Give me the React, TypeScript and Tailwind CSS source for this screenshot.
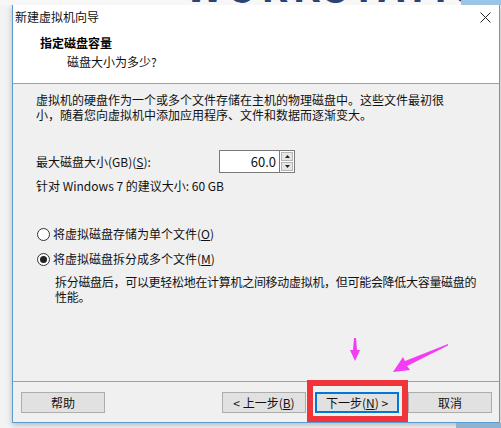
import React from 'react';

const font = { fontFamily: '"Noto Sans CJK SC", "Noto Sans", sans-serif' };

function Radio({ checked }: { checked?: boolean }) {
  return (
    <span className="w-[13px] h-[13px] rounded-full border border-[#333] bg-white flex items-center justify-center shrink-0">
      {checked && <span className="w-[7px] h-[7px] rounded-full bg-[#222]" />}
    </span>
  );
}

function Btn({ children, focused }: { children: React.ReactNode; focused?: boolean }) {
  return (
    <button
      className={
        'w-[84px] h-[21px] flex items-center justify-center text-[12px] text-[#111] bg-[#e1e1e1] ' +
        (focused ? 'border-2 border-[#0078d7]' : 'border border-[#adadad]')
      }
    >
      {children}
    </button>
  );
}

export default function App() {
  return (
    <div className="w-[501px] h-[428px] bg-[#f3f3f3] relative overflow-hidden" style={font}>
      {/* background strip showing behind the dialog */}
      <div className="h-[5px] overflow-hidden relative bg-[#f7f7f7]">
        <div className="absolute left-[186px] top-[-33px] text-[40px] font-bold tracking-[4px] text-[#2a4370] leading-[36px] whitespace-nowrap">
          WORKSTATION 12
        </div>
        <div className="absolute right-0 top-0 w-[40px] h-[5px] bg-[#9cc4e4]" />
      </div>

      {/* dialog window */}
      <div className="ml-[12px] w-[488px] h-[418px] border-x border-b border-[#5b9bd5] bg-[#f0f0f0] flex flex-col shadow-[0_2px_6px_rgba(0,0,0,0.25)]">
        {/* title bar */}
        <div className="h-[23px] bg-white flex items-center justify-between pl-[2px] pr-[8px]">
          <span className="text-[12px] text-[#111]">新建虚拟机向导</span>
          <svg width="11" height="11" viewBox="0 0 11 11" className="mt-[1px]">
            <path d="M0.5 0.5 L10.5 10.5 M10.5 0.5 L0.5 10.5" stroke="#222" strokeWidth="1" />
          </svg>
        </div>

        {/* header */}
        <div className="h-[56px] bg-white border-b border-[#a0a0a0] pl-[27px] pt-[6px]">
          <div className="text-[12px] font-bold text-[#000] leading-[17px]">指定磁盘容量</div>
          <div className="text-[12px] text-[#111] leading-[17px] mt-[2px] pl-[27px]">磁盘大小为多少?</div>
        </div>

        {/* body */}
        <div className="flex-1 border-b border-[#a0a0a0] pl-[23px] pt-[8px] text-[12px] text-[#111]">
          <div className="whitespace-nowrap">
            <div className="h-[15px] leading-[15px]">虚拟机的硬盘作为一个或多个文件存储在主机的物理磁盘中。这些文件最初很</div>
            <div className="h-[15px] leading-[15px]">小，随着您向虚拟机中添加应用程序、文件和数据而逐渐变大。</div>
          </div>

          <div className="flex items-center mt-[28px] h-[23px]">
            <span className="w-[183px]">
              最大磁盘大小(GB)(<span className="underline">S</span>):
            </span>
            <div className="w-[61px] h-[23px] bg-white border border-[#7a7a7a] flex items-center justify-end pr-[3px] text-[13px]">
              60.0
            </div>
            <div className="flex flex-col w-[15px] h-[23px] border border-l-0 border-[#7a7a7a] bg-white p-[1px] gap-[1px]">
              <div className="flex-1 bg-[#e6e6e6] border border-[#b5b5b5] flex items-center justify-center">
                <svg width="5" height="3" viewBox="0 0 5 3"><path d="M2.5 0 L5 3 L0 3 Z" fill="#222" /></svg>
              </div>
              <div className="flex-1 bg-[#e6e6e6] border border-[#b5b5b5] flex items-center justify-center">
                <svg width="5" height="3" viewBox="0 0 5 3"><path d="M0 0 L5 0 L2.5 3 Z" fill="#222" /></svg>
              </div>
            </div>
          </div>

          <div className="mt-[5px] leading-[15px]">针对 Windows 7 的建议大小: 60 GB</div>

          <div className="flex items-center gap-[3px] mt-[33px] h-[16px] pl-[1px]">
            <Radio />
            <span>
              将虚拟磁盘存储为单个文件(<span className="underline">O</span>)
            </span>
          </div>
          <div className="flex items-center gap-[3px] mt-[9px] h-[16px] pl-[1px]">
            <Radio checked />
            <span>
              将虚拟磁盘拆分成多个文件(<span className="underline">M</span>)
            </span>
          </div>
          <div className="mt-[7px] pl-[19px] whitespace-nowrap tracking-[-0.3px]">
            <div className="h-[15px] leading-[15px]">拆分磁盘后，可以更轻松地在计算机之间移动虚拟机，但可能会降低大容量磁盘的</div>
            <div className="h-[15px] leading-[15px]">性能。</div>
          </div>
        </div>

        {/* footer */}
        <div className="h-[40px] flex items-start pt-[10px] pl-[8px] pr-[7px]">
          <Btn>帮助</Btn>
          <div className="flex-1" />
          <div className="flex gap-[9px]">
            <Btn>
              &lt; 上一步(<span className="underline">B</span>)
            </Btn>
            <Btn focused>
              下一步(<span className="underline">N</span>) &gt;
            </Btn>
            <Btn>取消</Btn>
          </div>
        </div>
      </div>

      {/* bottom-right desktop corner */}
      <div className="absolute right-0 bottom-0 w-[45px] h-[5px] bg-[#8fb3cf]" />

      {/* annotation: red highlight box */}
      <div className="absolute left-[307px] top-[380px] w-[101px] h-[42px] border-[6px] border-[#f0343c]" />

      {/* annotation: magenta arrows */}
      <svg className="absolute left-0 top-0" width="501" height="428" viewBox="0 0 501 428">
        <path d="M354 338 L356 338 L357 350 L360 350 L355 361 L350 350 L353 350 Z" fill="#f53cf5" />
        <path d="M448 344 L405 361 L403 357 L393 372 L410 370 L407 366 L448 345.5 Z" fill="#f53cf5" />
      </svg>
    </div>
  );
}
